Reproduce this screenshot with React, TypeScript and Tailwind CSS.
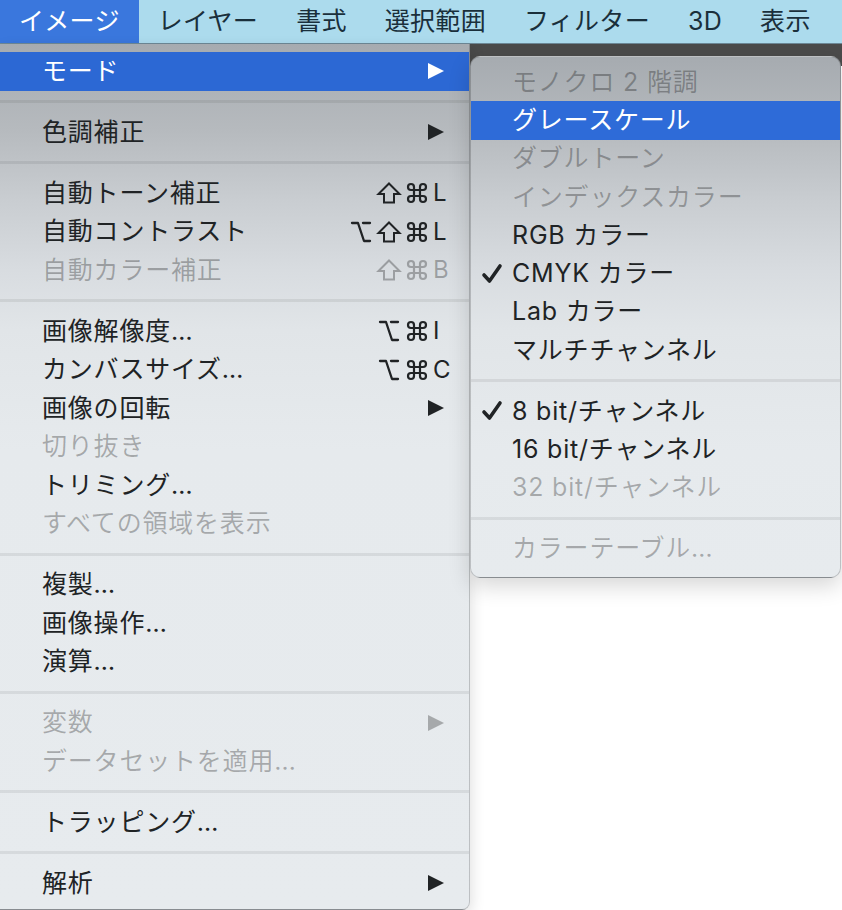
import React from 'react';
import { Command, Option } from 'lucide-react';

type Item =
  | 'sep'
  | {
      label: string;
      hl?: boolean;
      dis?: boolean;
      sub?: boolean;
      sc?: string[];
      check?: boolean;
    };

const mainItems: Item[] = [
  { label: 'モード', sub: true, hl: true },
  'sep',
  { label: '色調補正', sub: true },
  'sep',
  { label: '自動トーン補正', sc: ['shift', 'cmd', 'L'] },
  { label: '自動コントラスト', sc: ['opt', 'shift', 'cmd', 'L'] },
  { label: '自動カラー補正', sc: ['shift', 'cmd', 'B'], dis: true },
  'sep',
  { label: '画像解像度…', sc: ['opt', 'cmd', 'I'] },
  { label: 'カンバスサイズ…', sc: ['opt', 'cmd', 'C'] },
  { label: '画像の回転', sub: true },
  { label: '切り抜き', dis: true },
  { label: 'トリミング…' },
  { label: 'すべての領域を表示', dis: true },
  'sep',
  { label: '複製…' },
  { label: '画像操作…' },
  { label: '演算…' },
  'sep',
  { label: '変数', sub: true, dis: true },
  { label: 'データセットを適用…', dis: true },
  'sep',
  { label: 'トラッピング…' },
  'sep',
  { label: '解析', sub: true },
];

const subItems: Item[] = [
  { label: 'モノクロ 2 階調', dis: true },
  { label: 'グレースケール', hl: true },
  { label: 'ダブルトーン', dis: true },
  { label: 'インデックスカラー', dis: true },
  { label: 'RGB カラー' },
  { label: 'CMYK カラー', check: true },
  { label: 'Lab カラー' },
  { label: 'マルチチャンネル' },
  'sep',
  { label: '8 bit/チャンネル', check: true },
  { label: '16 bit/チャンネル' },
  { label: '32 bit/チャンネル', dis: true },
  'sep',
  { label: 'カラーテーブル…', dis: true },
];

function Tri({ className }: { className: string }) {
  return (
    <svg width="18" height="18" viewBox="0 0 18 18" className={className}>
      <polygon points="1,1 17,9 1,17" fill="currentColor" />
    </svg>
  );
}

function Key({ k }: { k: string }) {
  if (k === 'cmd')
    return (
      <span className="w-[28px] flex justify-center">
        <Command size={24} strokeWidth={2.2} />
      </span>
    );
  if (k === 'opt')
    return (
      <span className="w-[28px] flex justify-center">
        <Option size={24} strokeWidth={2.3} />
      </span>
    );
  if (k === 'shift')
    return (
      <span className="w-[28px] flex justify-center">
        <svg width="26" height="24" viewBox="0 0 26 24">
          <path
            d="M13 2.5 L23.5 13 H18 V21.5 H8 V13 H2.5 Z"
            fill="none"
            stroke="currentColor"
            strokeWidth="2"
            strokeLinejoin="miter"
          />
        </svg>
      </span>
    );
  return <span className="w-[18px] pl-[2px] text-[24px] leading-none tracking-normal">{k}</span>;
}

function Sep() {
  return (
    <div className="h-[22.5px] flex items-center">
      <div className="h-[3px] w-full bg-black/[0.07]" />
    </div>
  );
}

function MainRow({ it }: { it: Exclude<Item, 'sep'> }) {
  const color = it.hl ? 'text-white' : it.dis ? 'text-black/[0.28]' : 'text-[#202325]';
  return (
    <div
      className={`flex items-center h-[38.5px] pl-[42px] pr-[20px] ${
        it.hl ? 'bg-[#2c68d4]' : ''
      } ${color}`}
    >
      <span className="flex-1 leading-none tracking-[0.8px]">{it.label}</span>
      {it.sc && (
        <span className="flex items-center">
          {it.sc.map((k, i) => (
            <Key key={i} k={k} />
          ))}
        </span>
      )}
      {it.sub && <Tri className="mr-[4px]" />}
    </div>
  );
}

function SubRow({ it }: { it: Exclude<Item, 'sep'> }) {
  const color = it.hl ? 'text-white' : it.dis ? 'text-black/[0.28]' : 'text-[#202325]';
  return (
    <div className={`flex items-center h-[38.3px] ${it.hl ? 'bg-[#2e6bd8]' : ''} ${color}`}>
      <span className="w-[41px] shrink-0 flex pl-[10px]">
        {it.check && (
          <svg width="22" height="22" viewBox="0 0 22 22">
            <path
              d="M3 12 L8.5 18 L19 3"
              fill="none"
              stroke="currentColor"
              strokeWidth="3.6"
              strokeLinecap="round"
              strokeLinejoin="round"
            />
          </svg>
        )}
      </span>
      <span className="leading-none tracking-[0.8px]">{it.label}</span>
    </div>
  );
}

const barItems = ['イメージ', 'レイヤー', '書式', '選択範囲', 'フィルター', '3D', '表示'];

export default function App() {
  return (
    <div className="w-[842px] h-[910px] overflow-hidden bg-white flex flex-col font-['Inter','Noto_Sans_CJK_JP',sans-serif] text-[25px]">
      <div className="h-[44px] shrink-0 flex items-stretch bg-[#acdbed] border-b border-[#6d8896] text-[#1a2f3b]">
        {barItems.map((b, i) => (
          <div
            key={b}
            className={`px-[19px] flex items-center leading-none tracking-[0.3px] ${
              i === 0 ? 'bg-[#3a77dd] text-white' : ''
            }`}
          >
            {b}
          </div>
        ))}
      </div>
      <div className="flex flex-1 items-start">
        <div className="w-[470px] shrink-0 relative z-10 pt-[8px] pb-[6px] rounded-br-[8px] border-r border-b border-black/[0.18] shadow-[2px_4px_14px_rgba(0,0,0,0.12)] bg-[linear-gradient(180deg,#a6abb0_0px,#b6babe_86px,#c9cdd1_156px,#d8dce0_226px,#e1e5e8_286px,#e6eaed_406px,#e7ebee_100%)]">
          {mainItems.map((it, i) =>
            it === 'sep' ? <Sep key={i} /> : <MainRow key={i} it={it} />
          )}
        </div>
        <div className="flex-1 self-stretch bg-[linear-gradient(180deg,#4b4b4b_0px,#4b4b4b_22px,#ffffff_22px)]">
          <div className="w-[371px] mt-[12px] relative z-20 pt-[6px] pb-[9px] rounded-[10px] border border-black/[0.18] shadow-[0_8px_22px_rgba(0,0,0,0.16)] bg-[linear-gradient(180deg,#a6abb0_0px,#b6babe_74px,#c9cdd1_144px,#d8dce0_214px,#e1e5e8_274px,#e6eaed_394px,#e7ebee_100%)]">
            {subItems.map((it, i) =>
              it === 'sep' ? <Sep key={i} /> : <SubRow key={i} it={it} />
            )}
          </div>
        </div>
      </div>
    </div>
  );
}
